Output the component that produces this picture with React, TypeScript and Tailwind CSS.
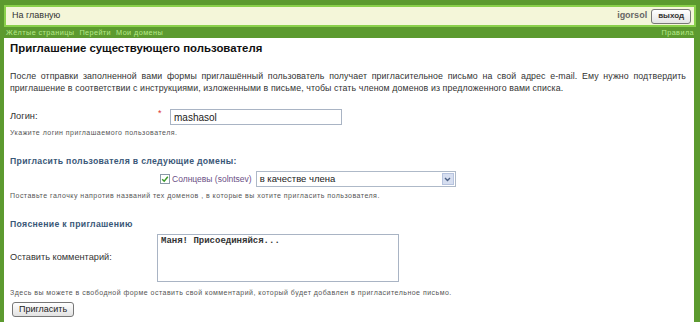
import { useState } from 'react'

export default function App() {
  const [login, setLogin] = useState('mashasol')
  const [checked, setChecked] = useState(true)
  const [comment, setComment] = useState('Маня! Присоединяйся...')

  return (
    <div className="w-[700px] h-[322px] overflow-hidden bg-[#5c9a2f] font-['Liberation_Sans',Arial,sans-serif] text-[#333]">
      {/* Top bar */}
      <div className="pt-[5px] px-[4px]">
        <div className="h-[22px] flex items-center justify-between bg-[#f4f6d9] border-2 border-[#8ad04b] pl-[6px] pr-[3px]">
          <span className="text-[9px] text-[#333]">На главную</span>
          <div className="flex items-center gap-[4px]">
            <span className="text-[9px] font-bold text-[#666]">igorsol</span>
            <button className="h-[15px] px-[6px] text-[8px] font-bold text-[#333] bg-gradient-to-b from-white to-[#e4e4e4] border border-[#777] rounded-[3px] leading-none">
              выход
            </button>
          </div>
        </div>
      </div>

      {/* Nav links */}
      <div className="h-[11px] flex items-center justify-between px-[6px] text-[7.3px] leading-[10px] tracking-[0.4px] text-[#b6e98a]">
        <div className="flex gap-[5px]">
          <span>Жёлтые страницы</span>
          <span>Перейти</span>
          <span>Мои домены</span>
        </div>
        <span>Правила</span>
      </div>

      {/* Content panel */}
      <div className="ml-[4px] mr-[6px] bg-white h-[300px] px-[6px] pt-[1px]">
        <h1 className="text-[11.4px] leading-[18px] font-bold text-[#111]">Приглашение существующего пользователя</h1>

        <p className="mt-[13px] text-[8.8px] leading-[12px] text-justify [text-align-last:left] text-[#333] pr-[2px] tracking-[0.1px]">
          После отправки заполненной вами формы приглашённый пользователь получает пригласительное письмо на свой адрес e-mail. Ему нужно подтвердить приглашение в соответствии с инструкциями, изложенными в письме, чтобы стать членом доменов из предложенного вами списка.
        </p>

        {/* Login */}
        <div className="mt-[15px] h-[16px] flex items-center">
          <span className="w-[148px] text-[9.3px] text-[#333]">Логин:</span>
          <span className="w-[12px] text-[9px] text-[#d33] self-start -mt-[2px]">*</span>
          <input
            value={login}
            onChange={(e) => setLogin(e.target.value)}
            className="w-[172px] h-[16px] border border-[#a9b4c4] px-[3px] text-[10px] text-[#222] outline-none"
          />
        </div>
        <div className="mt-[3px] text-[7px] leading-[10px] tracking-[0.48px] text-[#555]">Укажите логин приглашаемого пользователя.</div>

        {/* Domains */}
        <h2 className="mt-[17px] text-[8.7px] leading-[12px] font-bold tracking-[0.3px] text-[#3a5878]">Пригласить пользователя в следующие домены:</h2>
        <div className="mt-[4px] h-[16px] flex items-center pl-[150px]">
          <label className="flex items-center gap-[2px] text-[8.5px] text-[#6b4f86] cursor-pointer">
            <input
              type="checkbox"
              checked={checked}
              onChange={(e) => setChecked(e.target.checked)}
              className="sr-only"
            />
            <span className="w-[10px] h-[10px] border border-[#8a9aa8] bg-white flex items-center justify-center">
              {checked && (
                <svg width="8" height="8" viewBox="0 0 8 8">
                  <path d="M1.2 4.2 L3.2 6.2 L6.8 1.8" fill="none" stroke="#3a9a2a" strokeWidth="1.5" />
                </svg>
              )}
            </span>
            Солнцевы (solntsev)
          </label>
          <div className="ml-[4px] w-[200px] h-[16px] border border-[#aeb9c8] flex items-center justify-between">
            <span className="pl-[3px] text-[9.5px] text-[#222]">в качестве члена</span>
            <span className="w-[12px] h-[12px] mr-[1px] bg-[#d6def0] border border-[#b6c3de] flex items-center justify-center">
              <svg width="7" height="5" viewBox="0 0 7 5">
                <path d="M1 1 L3.5 3.5 L6 1" fill="none" stroke="#4d6185" strokeWidth="1.4" />
              </svg>
            </span>
          </div>
        </div>
        <div className="mt-[4px] text-[7px] leading-[10px] tracking-[0.48px] text-[#555]">
          Поставьте галочку напротив названий тех доменов , в которые вы хотите пригласить пользователя.
        </div>

        {/* Comment */}
        <h2 className="mt-[17px] text-[8.7px] leading-[12px] font-bold tracking-[0.3px] text-[#3a5878]">Пояснение к приглашению</h2>
        <div className="mt-[4px] flex items-center">
          <span className="w-[147px] text-[9.2px] text-[#333]">Оставить комментарий:</span>
          <textarea
            value={comment}
            onChange={(e) => setComment(e.target.value)}
            className="block w-[242px] h-[48px] border border-[#a9b4c4] px-[3px] py-0 text-[9px] leading-[12px] font-['Liberation_Mono','DejaVu_Sans_Mono',monospace] font-bold text-[#333] resize-none outline-none"
          />
        </div>
        <div className="mt-[6px] text-[7px] leading-[10px] tracking-[0.48px] text-[#555]">
          Здесь вы можете в свободной форме оставить свой комментарий, который будет добавлен в пригласительное письмо.
        </div>
        <button className="block mt-[4px] ml-[2px] h-[15px] px-[6px] text-[9px] text-[#222] bg-gradient-to-b from-white to-[#e2e2e2] border border-[#777] rounded-[3px] leading-none">
          Пригласить
        </button>
      </div>
    </div>
  )
}
